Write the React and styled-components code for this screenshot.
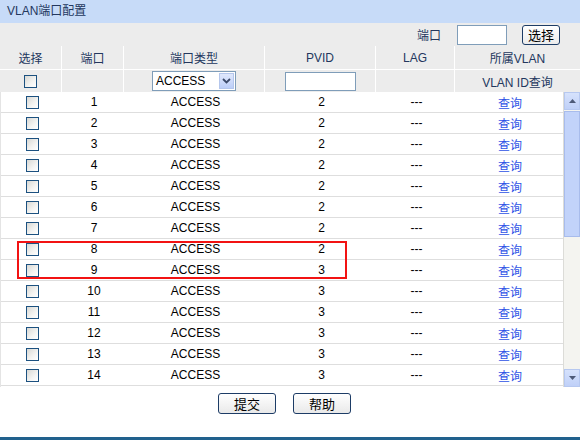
import React from "react";
import styled, { createGlobalStyle } from "styled-components";

const Global = createGlobalStyle`
  html, body { margin: 0; padding: 0; background: #fff; }
  body { font-family: "Liberation Sans", "Noto Sans CJK SC", Arial, sans-serif; font-size: 12px; }
`;

const COLS = "62px 62px 141px 111px 79px 125px";
const BODY_COLS = "62px 62px 141px 111px 79px 108px";

const Page = styled.div`
  width: 580px;
  height: 442px;
  position: relative;
  display: flex;
  flex-direction: column;
  background: #fff;
`;

const TitleBar = styled.div`
  height: 23px;
  background: #c7dbf8;
  color: #23375e;
  font-size: 12px;
  line-height: 23px;
  padding-left: 7px;
  font-family: "Liberation Sans", "Noto Sans CJK SC", sans-serif;
`;

const Toolbar = styled.div`
  height: 23px;
  background: #ececec;
  display: flex;
  align-items: center;
  justify-content: flex-end;
  padding-right: 20px;
  color: #23375e;
`;

const ToolLabel = styled.span`
  margin-right: 16px;
  font-size: 12px;
`;

const TextBox = styled.div`
  width: ${(p) => p.$w}px;
  height: ${(p) => p.$h}px;
  box-sizing: border-box;
  border: 1px solid #7f9db9;
  background: #fff;
`;

const SmallButton = styled.button`
  margin-left: 15px;
  width: 38px;
  height: 20px;
  box-sizing: border-box;
  border: 1px solid #1d3c66;
  border-radius: 3px;
  background: linear-gradient(#ffffff, #ececec);
  font-family: "Noto Sans CJK SC", sans-serif;
  font-size: 13px;
  line-height: 16px;
  padding: 0;
  color: #000;
`;

const HeadRow = styled.div`
  display: grid;
  grid-template-columns: ${COLS};
  height: 23px;
  background: #ececec;
  border-top: ${(p) => (p.$top ? "1px solid #ffffff" : "none")};
  color: #23375e;
  box-sizing: border-box;
`;

const HeadCell = styled.div`
  display: flex;
  align-items: center;
  justify-content: center;
  border-right: ${(p) => (p.$last ? "none" : "1px solid #ffffff")};
  font-size: 12px;
`;

const Check = styled.span`
  display: inline-block;
  width: 13px;
  height: 13px;
  box-sizing: border-box;
  border: 1px solid #1c5180;
  background: linear-gradient(135deg, #d8d8d4 0%, #f4f4f2 60%, #ffffff 100%);
`;

const FakeSelect = styled.div`
  width: 84px;
  height: 20px;
  box-sizing: border-box;
  border: 1px solid #7f9db9;
  background: #fff;
  display: flex;
  align-items: center;
  justify-content: space-between;
  padding: 1px 1px 1px 3px;
  color: #000;
  font-size: 12px;
`;

const SelectArrow = styled.span`
  width: 15px;
  height: 16px;
  box-sizing: border-box;
  border: 1px solid #b4c6ec;
  background: linear-gradient(#e0e8fc, #bccef8);
  display: flex;
  align-items: center;
  justify-content: center;
`;

const BodyWrap = styled.div`
  display: flex;
  height: 295px;
  position: relative;
`;

const Rows = styled.div`
  width: 563px;
  border-left: 1px solid #e4e4e4;
  box-sizing: border-box;
`;

const Row = styled.div`
  display: grid;
  grid-template-columns: ${BODY_COLS};
  height: 21px;
  box-sizing: border-box;
  border-bottom: 1px solid #dedede;
  color: #000;
`;

const Cell = styled.div`
  display: flex;
  align-items: center;
  justify-content: center;
  font-size: 12px;
`;

const Link = styled.span`
  color: #2e52e6;
  font-family: "Noto Sans CJK SC", sans-serif;
  font-size: 12px;
`;

const Scrollbar = styled.div`
  width: 17px;
  border-left: 1px solid #dcdcd8;
  box-sizing: border-box;
  background: #f4f4f0;
  display: flex;
  flex-direction: column;
`;

const ScrollBtn = styled.div`
  height: 18px;
  box-sizing: border-box;
  border: 1px solid #b6c8f0;
  background: linear-gradient(#d6e2fc, #bfd0f8);
  display: flex;
  align-items: center;
  justify-content: center;
  margin-top: ${(p) => (p.$bottom ? "auto" : "0")};
`;

const Thumb = styled.div`
  height: 126px;
  margin-top: 1px;
  box-sizing: border-box;
  border: 1px solid #a8bcec;
  background: #c2d3fa;
`;

const Highlight = styled.div`
  position: absolute;
  left: 17px;
  top: 149px;
  width: 330px;
  height: 38px;
  box-sizing: border-box;
  border: 2px solid #f21313;
  pointer-events: none;
`;

const Footer = styled.div`
  display: flex;
  justify-content: center;
  gap: 17px;
  padding-top: 6px;
  padding-right: 11px;
`;

const Button = styled.button`
  width: 58px;
  height: 21px;
  box-sizing: border-box;
  border: 1px solid #1d3c66;
  border-radius: 3px;
  background: linear-gradient(#ffffff, #e9e9e9);
  font-family: "Noto Sans CJK SC", sans-serif;
  font-size: 13px;
  line-height: 17px;
  padding: 0;
  color: #000;
`;

const BottomLine = styled.div`
  position: absolute;
  left: 0;
  right: 0;
  top: 437px;
  height: 3px;
  background: #21618d;
`;

const Tri = ({ down }) => (
  <svg width="7" height="4" viewBox="0 0 7 4">
    <path d={down ? "M0 0 L7 0 L3.5 4 Z" : "M0 4 L7 4 L3.5 0 Z"} fill="#4d5a78" />
  </svg>
);

const rows = [
  [1, 2], [2, 2], [3, 2], [4, 2], [5, 2], [6, 2], [7, 2],
  [8, 2], [9, 3], [10, 3], [11, 3], [12, 3], [13, 3], [14, 3],
];

export default function App() {
  return (
    <Page>
      <Global />
      <TitleBar>VLAN端口配置</TitleBar>
      <Toolbar>
        <ToolLabel>端口</ToolLabel>
        <TextBox $w={50} $h={20} />
        <SmallButton>选择</SmallButton>
      </Toolbar>
      <HeadRow>
        <HeadCell>选择</HeadCell>
        <HeadCell>端口</HeadCell>
        <HeadCell>端口类型</HeadCell>
        <HeadCell>PVID</HeadCell>
        <HeadCell>LAG</HeadCell>
        <HeadCell $last>所属VLAN</HeadCell>
      </HeadRow>
      <HeadRow $top>
        <HeadCell><Check /></HeadCell>
        <HeadCell />
        <HeadCell>
          <FakeSelect>
            ACCESS
            <SelectArrow>
              <svg width="9" height="6" viewBox="0 0 9 6">
                <path d="M1 1 L4.5 4.5 L8 1" fill="none" stroke="#3c4a6a" strokeWidth="1.8" />
              </svg>
            </SelectArrow>
          </FakeSelect>
        </HeadCell>
        <HeadCell><TextBox $w={71} $h={19} /></HeadCell>
        <HeadCell />
        <HeadCell $last>VLAN ID查询</HeadCell>
      </HeadRow>
      <BodyWrap>
        <Rows>
          {rows.map(([port, pvid]) => (
            <Row key={port}>
              <Cell><Check /></Cell>
              <Cell>{port}</Cell>
              <Cell>ACCESS</Cell>
              <Cell>{pvid}</Cell>
              <Cell>---</Cell>
              <Cell><Link>查询</Link></Cell>
            </Row>
          ))}
        </Rows>
        <Scrollbar>
          <ScrollBtn><Tri /></ScrollBtn>
          <Thumb />
          <ScrollBtn $bottom><Tri down /></ScrollBtn>
        </Scrollbar>
        <Highlight />
      </BodyWrap>
      <Footer>
        <Button>提交</Button>
        <Button>帮助</Button>
      </Footer>
      <BottomLine />
    </Page>
  );
}
